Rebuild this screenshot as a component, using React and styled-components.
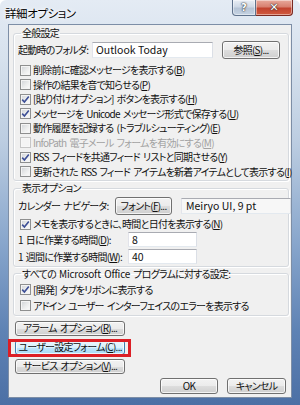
import React from "react";
import styled, { createGlobalStyle } from "styled-components";

const GlobalStyle = createGlobalStyle`
  html, body {
    margin: 0;
    padding: 0;
    background: #ffffff;
  }
  body {
    font-family: "Noto Sans CJK JP", "Liberation Sans", sans-serif;
    font-feature-settings: "palt";
  }
`;

// Frame
const Window = styled.div`
  width: 300px;
  height: 405px;
  box-sizing: border-box;
  display: flex;
  flex-direction: column;
  padding: 0 8px 7px 8px;
  border-radius: 6px 6px 0 0;
  overflow: hidden;
  background: linear-gradient(
    180deg,
    #e4ebf4 0%,
    #d6e1ed 15%,
    #bccde1 35%,
    #88a6cc 60%,
    #5e82b4 82%,
    #4c70a5 100%
  );
`;

const TitleBar = styled.div`
  height: 24px;
  flex: none;
  display: flex;
  align-items: flex-start;
  justify-content: space-between;
  margin: 0 -1px 0 -3px;
`;

const Title = styled.div`
  font-size: 11.5px;
  line-height: 14px;
  margin-top: 6px;
  color: #000;
  letter-spacing: -0.4px;
  text-shadow: 0 0 6px #fff, 0 0 3px #fff;
`;

const Caption = styled.div`
  display: flex;
`;

const CaptionButton = styled.div`
  height: 16px;
  width: ${(p) => (p.close ? "37px" : "24px")};
  box-sizing: border-box;
  display: flex;
  align-items: center;
  justify-content: center;
  border: 1px solid ${(p) => (p.close ? "#7a2a22" : "#5f728c")};
  border-top: none;
  border-left: ${(p) => (p.close ? "none" : "")};
  border-radius: ${(p) => (p.close ? "0 0 4px 0" : "0 0 0 4px")};
  background: ${(p) =>
    p.close
      ? "linear-gradient(180deg, #e8a99c 0%, #d88070 45%, #c2432f 55%, #d05a3e 100%)"
      : "linear-gradient(180deg, #e9eef5 0%, #cfd9e6 45%, #b6c4d6 55%, #c5d3e3 100%)"};
  box-shadow: inset 0 0 0 1px rgba(255, 255, 255, 0.45);
  color: #fff;
  font-family: "DejaVu Sans", sans-serif;
  font-weight: bold;
  font-size: ${(p) => (p.close ? "11px" : "10px")};
  text-shadow: 0 0 2px #3a3a3a, 0 0 1px #000;
`;

const Client = styled.div`
  flex: 1;
  box-sizing: border-box;
  display: flex;
  flex-direction: column;
  background: #f0f0f0;
  border: 1px solid #7d8ea6;
  padding: 1px 2px 0 3px;
  font-size: 10px;
  line-height: 14px;
  color: #111;
  letter-spacing: -0.75px;
  word-spacing: 1.5px;
  white-space: nowrap;
`;

// Group boxes
const Group = styled.fieldset`
  margin: 0 0 0 1px;
  padding: 0 4px ${(p) => p.bottom || 1}px 4px;
  border: 1px solid #d5d9de;
  border-radius: 3px;
  box-shadow: inset 1px 1px 0 #ffffff, 1px 1px 0 #ffffff;
  min-width: 0;
`;

const Legend = styled.legend`
  margin-left: 3px;
  padding: 0 1px;
  line-height: 14px;
`;

const U = styled.span`
  text-decoration: underline;
  text-underline-offset: 1px;
`;

const Latin = styled.span`
  letter-spacing: -0.2px;
`;

// Rows
const FieldRow = styled.div`
  display: grid;
  grid-template-columns: ${(p) => p.cols};
  column-gap: ${(p) => p.gap || 9}px;
  align-items: center;
  height: ${(p) => p.h}px;
  margin-top: ${(p) => p.mt || 0}px;
`;

const CheckRow = styled.div`
  display: flex;
  align-items: center;
  height: ${(p) => p.h || 14.5}px;
  margin-top: ${(p) => p.mt || 0}px;
  color: ${(p) => (p.disabled ? "#a2a2a2" : "inherit")};
`;

const Box = styled.span`
  width: 11px;
  height: 11px;
  box-sizing: border-box;
  flex: none;
  margin: 0 2px 0 2px;
  display: flex;
  align-items: center;
  justify-content: center;
  border: 1px solid ${(p) => (p.disabled ? "#c6c6c6" : "#8e8f8f")};
  background: ${(p) =>
    p.disabled
      ? "#f4f4f4"
      : "linear-gradient(135deg, #cfd2d6 0%, #eceded 55%, #fdfdfd 100%)"};
  box-shadow: inset 0 0 0 1px ${(p) => (p.disabled ? "#f7f7f7" : "#f4f4f4")};
`;

const TextBox = styled.div`
  height: ${(p) => p.h || 16}px;
  box-sizing: border-box;
  display: flex;
  align-items: center;
  padding-left: ${(p) => p.pl || 3}px;
  border: 1px solid #a9abb2;
  border-color: #a9abb2 #dbdfe6 #e3e9ef #e2e3ea;
  background: ${(p) => p.bg || "#ffffff"};
  font-size: ${(p) => p.fs || 10.5}px;
  letter-spacing: 0;
  word-spacing: 0;
`;

const Button = styled.div`
  position: relative;
  height: ${(p) => p.h || 16}px;
  width: ${(p) => p.w}px;
  box-sizing: border-box;
  display: flex;
  align-items: center;
  justify-content: center;
  border: 1px solid ${(p) => (p.hot ? "#3c7fb1" : "#707070")};
  border-radius: 3px;
  background: ${(p) =>
    p.hot
      ? "linear-gradient(180deg, #eaf6fd 0%, #d9f0fc 50%, #bee6fd 51%, #a7d9f5 100%)"
      : "linear-gradient(180deg, #f2f2f2 0%, #ebebeb 50%, #dddddd 51%, #cfcfcf 100%)"};
  box-shadow: inset 0 0 0 1px rgba(255, 255, 255, 0.75);
`;

const Highlight = styled.span`
  position: absolute;
  left: -8px;
  right: -7px;
  top: -2px;
  bottom: -3px;
  border: 3px solid #dc1f26;
  pointer-events: none;
`;

const ButtonStack = styled.div`
  display: flex;
  flex-direction: column;
  gap: 4px;
  margin: 5px 0 0 3px;
`;

const Footer = styled.div`
  display: flex;
  justify-content: flex-end;
  gap: 9px;
  margin: 4px 3px 0 0;
`;

function Check({ checked, disabled }) {
  return (
    <Box disabled={disabled}>
      {checked && (
        <svg width="9" height="9" viewBox="0 0 9 9">
          <path
            d="M1.2 4.6 L3.4 7 L7.8 1.4"
            fill="none"
            stroke="#3d4f96"
            strokeWidth="1.6"
          />
        </svg>
      )}
    </Box>
  );
}

function CheckItem({ checked, disabled, h, mt, children }) {
  return (
    <CheckRow disabled={disabled} h={h} mt={mt}>
      <Check checked={checked} disabled={disabled} />
      <span>{children}</span>
    </CheckRow>
  );
}

const generalItems = [
  { text: "削除前に確認メッセージを表示する(", key: "B" },
  { text: "操作の結果を音で知らせる(", key: "P" },
  { text: "[貼り付けオプション] ボタンを表示する(", key: "H", checked: true },
  { text: "メッセージを Unicode メッセージ形式で保存する(", key: "U", checked: true },
  { text: "動作履歴を記録する (トラブルシューティング)(", key: "E" },
  { text: "InfoPath 電子メール フォームを有効にする(", key: "M", disabled: true },
  { text: "RSS フィードを共通フィード リストと同期させる(", key: "Y", checked: true },
  { text: "更新された RSS フィード アイテムを新着アイテムとして表示する(", key: "I" },
];

export default function App() {
  return (
    <>
      <GlobalStyle />
      <Window>
        <TitleBar>
          <Title>詳細オプション</Title>
          <Caption>
            <CaptionButton>?</CaptionButton>
            <CaptionButton close>✕</CaptionButton>
          </Caption>
        </TitleBar>
        <Client>
          <Group>
            <Legend>全般設定</Legend>
            <FieldRow cols="65px 121px 58px" h={18} mt={1}>
              <span>起動時のフォルダ:</span>
              <TextBox>Outlook Today</TextBox>
              <Button w={58} h={18}>
                参照(<U>S</U>)...
              </Button>
            </FieldRow>
            {generalItems.map((item, i) => (
              <CheckItem
                key={item.key}
                checked={item.checked}
                disabled={item.disabled}
                mt={i === 0 ? 4 : 0}
              >
                {item.text}
                <U>{item.key}</U>)
              </CheckItem>
            ))}
          </Group>

          <Group>
            <Legend>表示オプション</Legend>
            <FieldRow cols="88px 57px 110px" h={19} mt={1}>
              <span>カレンダー ナビゲータ:</span>
              <Button w={57} h={18}>
                フォント(<U>F</U>)...
              </Button>
              <TextBox bg="#f7f7f7" fs={10.5} pl={4}>
                Meiryo UI, 9 pt
              </TextBox>
            </FieldRow>
            <CheckItem checked mt={2}>
              メモを表示するときに、時間と日付を表示する(<U>N</U>)
            </CheckItem>
            <FieldRow cols="101px 69px" h={16} gap={9}>
              <span>
                1 日に作業する時間(<U>D</U>):
              </span>
              <TextBox h={15}>8</TextBox>
            </FieldRow>
            <FieldRow cols="101px 69px" h={16} gap={9} mt={1}>
              <span>
                1 週間に作業する時間(<U>W</U>):
              </span>
              <TextBox h={15}>40</TextBox>
            </FieldRow>
          </Group>

          <Group bottom={0}>
            <Legend>
              すべての <Latin>Microsoft Office</Latin> プログラムに対する設定:
            </Legend>
            <CheckItem checked h={16} mt={1}>
              [開発] タブをリボンに表示する
            </CheckItem>
            <CheckItem h={16}>アドイン ユーザー インターフェイスのエラーを表示する</CheckItem>
          </Group>

          <ButtonStack>
            <Button w={110} h={15}>
              アラーム オプション(<U>R</U>)...
            </Button>
            <Button w={110} h={15} hot>
              ユーザー設定フォーム(<U>C</U>)...
              <Highlight />
            </Button>
            <Button w={110} h={15}>
              サービス オプション(<U>V</U>)...
            </Button>
          </ButtonStack>

          <Footer>
            <Button w={58}>OK</Button>
            <Button w={59}>キャンセル</Button>
          </Footer>
        </Client>
      </Window>
    </>
  );
}
